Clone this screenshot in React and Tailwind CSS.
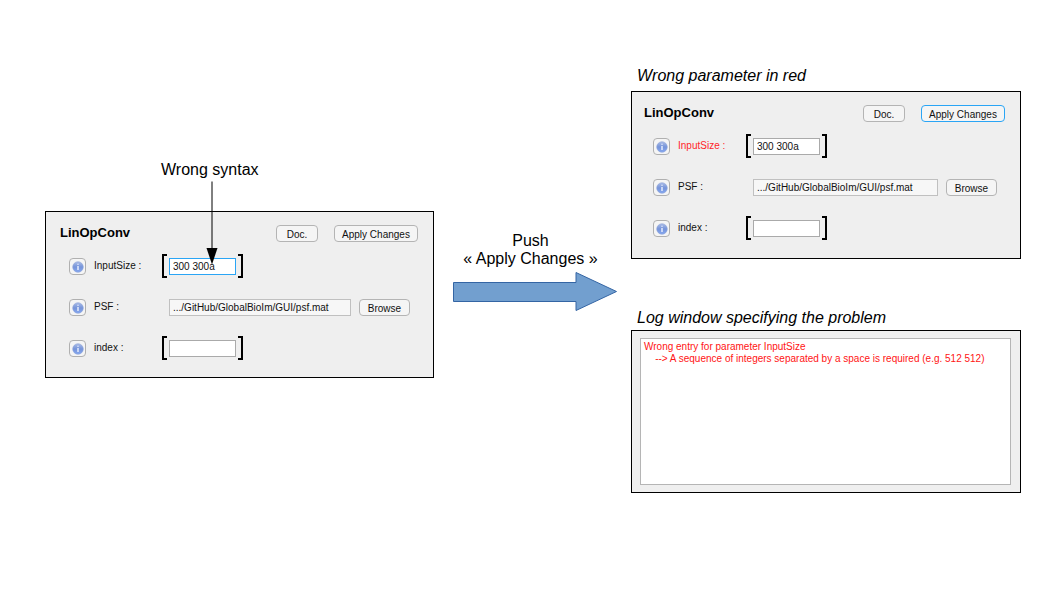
import { useId } from "react";

function InfoIcon() {
  const id = useId();
  return (
    <svg viewBox="0 0 12 12" className="mt-px h-3 w-3" aria-hidden="true">
      <defs>
        <linearGradient id={id} x1="0" y1="0" x2="0" y2="1">
          <stop offset="0" stopColor="#a9bbe6" />
          <stop offset="0.5" stopColor="#7694da" />
          <stop offset="1" stopColor="#86a8f0" />
        </linearGradient>
      </defs>
      <circle cx="6" cy="6" r="5.3" fill={`url(#${id})`} stroke="#8fa4d8" strokeWidth="0.6" />
      <circle cx="6" cy="3.3" r="0.8" fill="#dfe7fa" />
      <path d="M5.2 4.9h1.6v4.2H5.2z" fill="#dfe7fa" />
    </svg>
  );
}

function InfoButton({ name }) {
  return (
    <button
      type="button"
      aria-label={`About ${name}`}
      className="flex h-[17px] w-[17px] items-center justify-center rounded-[4px] border border-[#b0b0b0] bg-[#f5f5f5]"
    >
      <InfoIcon />
    </button>
  );
}

function PanelButton({ children, width, active = false }) {
  return (
    <button
      type="button"
      className={`h-[17px] shrink-0 rounded-[4px] border bg-[#f5f5f5] pt-px text-center leading-[15px] ${width} ${
        active ? "border-[#2aa5f5]" : "border-[#b4b4b4]"
      }`}
    >
      {children}
    </button>
  );
}

function Bracketed({ children }) {
  return (
    <div className="flex items-center gap-[2px]">
      <span aria-hidden="true" className="h-6 w-[5px] border-y-2 border-l-2 border-black" />
      {children}
      <span aria-hidden="true" className="h-6 w-[5px] border-y-2 border-r-2 border-black" />
    </div>
  );
}

function Row({ id, name, invalid = false, children }) {
  return (
    <div className="flex h-6 items-center">
      <InfoButton name={name} />
      <label
        htmlFor={id}
        className={`ml-2 w-[68px] shrink-0 leading-[14px] ${invalid ? "text-[#ff1f2a]" : ""}`}
      >
        {name} :
      </label>
      {children}
    </div>
  );
}

const fieldClass = "h-[17px] border px-[3px] leading-[15px] outline-none";

function ParameterPanel({ rejected = false }) {
  const id = useId();
  return (
    <form
      className={`border border-black bg-[#efefef] pt-3 pr-[15px] text-[10px] leading-3 text-[#111] ${
        rejected ? "pb-[18px] pl-3" : "pb-[17px] pl-[14px]"
      }`}
    >
      <div className="flex items-center">
        <h2 className="grow text-[13px] leading-[18px] font-bold text-black">LinOpConv</h2>
        <PanelButton width="w-[42px]">Doc.</PanelButton>
        <div className="w-4" />
        <PanelButton width="w-[84px]" active={rejected}>
          Apply Changes
        </PanelButton>
      </div>
      <div className="mt-3 flex flex-col gap-[17px] pr-2 pl-[9px]">
        <Row id={`${id}-size`} name="InputSize" invalid={rejected}>
          <Bracketed>
            <input
              id={`${id}-size`}
              type="text"
              defaultValue="300 300a"
              aria-invalid={rejected}
              className={`${fieldClass} w-[67px] bg-white ${
                rejected ? "border-[#aaaaaa]" : "border-[#2aa5f5]"
              }`}
            />
          </Bracketed>
        </Row>
        <Row id={`${id}-psf`} name="PSF">
          <input
            id={`${id}-psf`}
            type="text"
            defaultValue=".../GitHub/GlobalBioIm/GUI/psf.mat"
            className={`${fieldClass} mr-2 ml-[7px] min-w-0 grow border-[#c0c0c0] bg-[#f7f7f7]`}
          />
          <PanelButton width="w-[51px]">Browse</PanelButton>
        </Row>
        <Row id={`${id}-index`} name="index">
          <Bracketed>
            <input
              id={`${id}-index`}
              type="text"
              className={`${fieldClass} w-[67px] border-[#aaaaaa] bg-white`}
            />
          </Bracketed>
        </Row>
      </div>
    </form>
  );
}

const logText = `Wrong entry for parameter InputSize
    --> A sequence of integers separated by a space is required (e.g. 512 512)`;

export default function App() {
  return (
    <main className="grid min-h-screen grid-cols-[389fr_197px_390fr] items-start bg-white pr-[37px] pl-[45px] font-['Liberation_Sans',Arial,sans-serif] text-base leading-[18px] text-black">
      <section className="relative pt-[161px]">
        <p className="mb-8 pl-[116px]">Wrong syntax</p>
        <ParameterPanel />
        <svg
          viewBox="0 0 12 84"
          className="pointer-events-none absolute top-[181px] left-[161px] h-[84px] w-3"
          aria-hidden="true"
        >
          <path d="M6 0.5V68" stroke="#000" strokeWidth="1" />
          <path d="M0.5 67h11L6 83.5z" fill="#000" />
        </svg>
      </section>

      <section className="flex flex-col items-center pt-[232px]">
        <p className="pr-1 text-center">
          Push
          <br />« Apply Changes »
        </p>
        <svg viewBox="0 0 166 40" className="mt-[3px] ml-1 h-10 w-[166px]" aria-hidden="true">
          <path
            d="M1.5 11.5H124V1.5L164.5 20.5L124 39.5V30.5H1.5z"
            fill="#729fcf"
            stroke="#3465a4"
            strokeWidth="1"
          />
        </svg>
      </section>

      <section className="pt-[67px]">
        <p className="mb-[6px] pl-[6px] italic">Wrong parameter in red</p>
        <ParameterPanel rejected />
        <label htmlFor="log" className="mt-[50px] mb-[3px] block pl-[6px] italic">
          Log window specifying the problem
        </label>
        <div className="border border-black bg-[#efefef] py-[7px] pr-[9px] pl-2">
          <textarea
            id="log"
            readOnly
            value={logText}
            className="block h-[147px] w-full resize-none border border-[#b5b5b5] bg-white px-[3px] py-[2px] text-[10px] leading-3 text-[#ff1414] outline-none"
          />
        </div>
      </section>
    </main>
  );
}
